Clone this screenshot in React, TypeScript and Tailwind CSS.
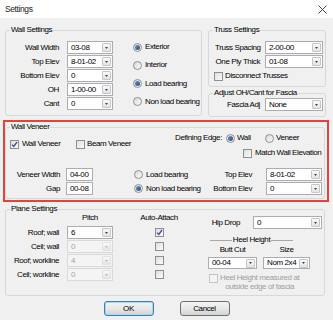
import React from "react";

function Group({ label, className, children }: { label: string; className: string; children?: React.ReactNode }) {
  return (
    <div className={`relative border border-[#d5d9dc] rounded-[3px] ${className}`}>
      <span className="absolute -top-[6px] left-[4px] bg-[#f0f0f0] px-[1px] leading-[10px] whitespace-nowrap">{label}</span>
      {children}
    </div>
  );
}

function Arrow({ disabled }: { disabled?: boolean }) {
  return (
    <div
      className={`w-[9px] h-[9px] mr-[1px] border rounded-[1px] bg-linear-to-b from-[#f9f9f9] to-[#e4e4e4] flex items-center justify-center shrink-0 ${
        disabled ? "border-[#e2e2e2]" : "border-[#c6c6c6]"
      }`}
    >
      <svg width="3" height="2" viewBox="0 0 3 2">
        <path d="M0 0H3L1.5 2Z" fill={disabled ? "#b8b8b8" : "#444"} />
      </svg>
    </div>
  );
}

function Combo({ value, className, disabled, noArrow }: { value: string; className: string; disabled?: boolean; noArrow?: boolean }) {
  return (
    <div
      className={`flex items-center border shrink-0 ${
        disabled ? "border-[#d9d9d9] bg-[#f4f4f4] text-[#a3a3a3]" : "border-[#abadb3] bg-white text-black"
      } ${className}`}
    >
      <span className="flex-1 pl-[3px] leading-none whitespace-nowrap">{value}</span>
      {!noArrow && <Arrow disabled={disabled} />}
    </div>
  );
}

function Check({ checked, disabled }: { checked?: boolean; disabled?: boolean }) {
  return (
    <div
      className={`w-[9px] h-[9px] border flex items-center justify-center shrink-0 ${
        disabled ? "border-[#c4c4c4] bg-[#f4f4f4]" : "border-[#8e8f8f] bg-linear-to-br from-[#dedede] to-[#fbfbfb]"
      }`}
    >
      {checked && (
        <svg width="7" height="7" viewBox="0 0 7 7">
          <path d="M1 3.6L2.8 5.5L6 1" fill="none" stroke="#3b4f8c" strokeWidth="1.3" />
        </svg>
      )}
    </div>
  );
}

function Radio({ checked }: { checked?: boolean }) {
  return (
    <div className="w-[9px] h-[9px] rounded-full border border-[#8e8f8f] bg-linear-to-br from-[#dadada] to-[#fbfbfb] flex items-center justify-center shrink-0">
      {checked && <div className="w-[5px] h-[5px] rounded-full bg-linear-to-br from-[#6f93c4] to-[#1f4b82]" />}
    </div>
  );
}

function Button({ label, def }: { label: string; def?: boolean }) {
  return (
    <div
      className={`w-[50px] h-[15px] rounded-[3px] border flex items-center justify-center bg-linear-to-b from-[#f4f4f4] via-[#e8e8e8] to-[#d3d3d3] ${
        def ? "border-[#3c7fb1] shadow-[inset_0_0_0_1px_#a9d6f0]" : "border-[#707070]"
      }`}
    >
      {label}
    </div>
  );
}

export default function App() {
  const wallRows = [
    ["Wall Width", "03-08"],
    ["Top Elev", "8-01-02"],
    ["Bottom Elev", "0"],
    ["OH", "1-00-00"],
    ["Cant", "0"],
  ];
  const radios: [string, boolean][] = [
    ["Exterior", true],
    ["Interior", false],
    ["Load bearing", true],
    ["Non load bearing", false],
  ];
  const planeRows: [string, string, boolean, boolean][] = [
    ["Roof; wall", "6", false, true],
    ["Ceil; wall", "0", true, false],
    ["Roof; workline", "4", true, false],
    ["Ceil; workline", "0", true, false],
  ];
  return (
    <div className="w-[333px] h-[320px] bg-[#f0f0f0] overflow-hidden text-[8px] tracking-[-0.4px] leading-[10px] text-black font-['Liberation_Sans',sans-serif]">
      {/* title bar */}
      <div className="h-[18px] bg-white flex items-center justify-between pl-[5px] pr-[6px]">
        <span className="text-[8.5px] text-[#222]">Settings</span>
        <svg width="9" height="9" viewBox="0 0 9 9">
          <path d="M0.5 0.5L8.5 8.5M8.5 0.5L0.5 8.5" stroke="#444" strokeWidth="1" />
        </svg>
      </div>

      {/* top row */}
      <div className="flex mt-[12px] ml-[5px] gap-[6px]">
        <Group label="Wall Settings" className="w-[197px] h-[86px]">
          <div className="flex">
            <div className="flex flex-col pt-[10px] gap-[1px]">
              {wallRows.map(([l, v]) => (
                <div key={l} className="flex items-center h-[13px]">
                  <span className="w-[53px] text-right whitespace-nowrap">{l}</span>
                  <Combo value={v} className="ml-[8px] w-[46px] h-[13px]" />
                </div>
              ))}
            </div>
            <div className="flex flex-col pt-[11px] gap-[8.3px] ml-[20px]">
              {radios.map(([l, c]) => (
                <div key={l} className="flex items-center h-[10px] gap-[3px] whitespace-nowrap">
                  <Radio checked={c} />
                  <span>{l}</span>
                </div>
              ))}
            </div>
          </div>
        </Group>

        <div className="flex flex-col w-[118px]">
          <Group label="Truss Settings" className="w-[118px] h-[57px]">
            <div className="flex flex-col pt-[10px] gap-[1px]">
              {[
                ["Truss Spacing", "2-00-00"],
                ["One Ply Thick", "01-08"],
              ].map(([l, v]) => (
                <div key={l} className="flex items-center h-[13px] pl-[6px]">
                  <span className="w-[45px] text-right whitespace-nowrap">{l}</span>
                  <Combo value={v} className="ml-[5px] w-[58px] h-[13px]" />
                </div>
              ))}
            </div>
            <div className="flex items-center h-[10px] mt-[3px] pl-[5px] gap-[2px] whitespace-nowrap">
              <Check />
              <span>Disconnect Trusses</span>
            </div>
          </Group>
          <Group label="Adjust OH/Cant for Fascia" className="w-[118px] h-[24px] mt-[6px]">
            <div className="flex items-center h-[13px] pl-[6px] mt-[4px]">
              <span className="w-[45px] text-right whitespace-nowrap">Fascia Adj</span>
              <Combo value="None" className="ml-[5px] w-[58px] h-[13px]" />
            </div>
          </Group>
        </div>
      </div>

      {/* Wall veneer highlighted */}
      <div className="ml-[3px] mt-[3px] w-[326px] h-[82px] border-2 border-[#e8413c]">
        <Group label="Wall Veneer" className="w-[320px] h-[72px] mt-[5px]">
          <div className="flex">
            <div className="w-[154px] pt-[11px]">
              <div className="flex items-center h-[10px] pl-[4px] whitespace-nowrap">
                <div className="flex items-center gap-[3px] w-[66px]">
                  <Check checked />
                  <span>Wall Veneer</span>
                </div>
                <div className="flex items-center gap-[2px]">
                  <Check />
                  <span>Beam Veneer</span>
                </div>
              </div>
            </div>
            <div className="flex flex-col pt-[5px]">
              <div className="flex items-center h-[10px] whitespace-nowrap">
                <span className="w-[62px] text-right">Defining Edge:</span>
                <div className="flex items-center gap-[2px] ml-[4px] w-[39px]">
                  <Radio checked />
                  <span>Wall</span>
                </div>
                <div className="flex items-center gap-[2px]">
                  <Radio />
                  <span>Veneer</span>
                </div>
              </div>
              <div className="flex items-center h-[10px] mt-[5px] ml-[83px] gap-[3px] whitespace-nowrap">
                <Check />
                <span>Match Wall Elevation</span>
              </div>
            </div>
          </div>
          <div className="flex flex-col mt-[10px] gap-[1px]">
            {[
              ["Veneer Width", "04-00", "Load bearing", false, "Top Elev", "8-01-02"],
              ["Gap", "00-08", "Non load bearing", true, "Bottom Elev", "0"],
            ].map(([l, v, r, rc, l2, v2]) => (
              <div key={l as string} className="flex items-center h-[13px] whitespace-nowrap">
                <span className="w-[54px] text-right">{l as string}</span>
                <Combo value={v as string} noArrow className="ml-[6px] w-[27px] h-[13px]" />
                <div className="flex items-center gap-[3px] ml-[41px] w-[70px]">
                  <Radio checked={rc as boolean} />
                  <span>{r as string}</span>
                </div>
                <span className="w-[48px] text-right">{l2 as string}</span>
                <Combo value={v2 as string} className="ml-[14px] w-[56px] h-[13px]" />
              </div>
            ))}
          </div>
        </Group>
      </div>

      {/* Plane settings */}
      <Group label="Plane Settings" className="ml-[5px] mt-[7px] w-[320px] h-[87px]">
        <div className="flex">
          <div className="w-[194px] pt-[3px]">
            <div className="flex items-center h-[10px]">
              <span className="w-[61px]" />
              <span className="w-[46px] text-center">Pitch</span>
              <span className="w-[36px]" />
              <span className="w-[20px] flex justify-center whitespace-nowrap">Auto-Attach</span>
            </div>
            <div className="flex flex-col mt-[3px] gap-[1px]">
              {planeRows.map(([l, v, dis, chk]) => (
                <div key={l} className="flex items-center h-[13px]">
                  <span className="w-[53px] text-right whitespace-nowrap">{l}</span>
                  <Combo value={v} disabled={dis} className="ml-[8px] w-[46px] h-[13px]" />
                  <div className="ml-[42px]">
                    <Check checked={chk} />
                  </div>
                </div>
              ))}
            </div>
          </div>
          <div className="flex flex-col pt-[6px]">
            <div className="flex items-center h-[13px]">
              <span className="w-[40px] text-right whitespace-nowrap">Hip Drop</span>
              <Combo value="0" className="ml-[13px] w-[69px] h-[13px]" />
            </div>
            <div className="flex items-center ml-[10px] w-[83px] h-[10px] mt-[6px]">
              <div className="flex-1 h-px bg-[#a8a8a8]" />
              <span className="px-[1px] whitespace-nowrap">Heel Height</span>
              <div className="flex-1 h-px bg-[#a8a8a8]" />
            </div>
            <div className="flex items-center h-[9px] ml-[8px]">
              <span className="w-[49px] text-center">Butt Cut</span>
              <span className="w-[47px] ml-[6px] text-center">Size</span>
            </div>
            <div className="flex items-center mt-[3px] ml-[8px]">
              <Combo value="00-04" className="w-[49px] h-[12px]" />
              <Combo value="Nom 2x4" className="ml-[6px] w-[47px] h-[12px]" />
            </div>
            <div className="flex items-start mt-[4px] ml-[9px]">
              <div className="mt-[0.5px]">
                <Check disabled />
              </div>
              <div className="ml-[2px] text-center leading-[9px] text-[#a0a0a0] whitespace-nowrap">
                <div>Heel Height measured at</div>
                <div>outside edge of fascia</div>
              </div>
            </div>
          </div>
        </div>
      </Group>

      {/* buttons */}
      <div className="flex justify-center gap-[26px] mt-[5px]">
        <Button label="OK" def />
        <Button label="Cancel" />
      </div>
    </div>
  );
}
